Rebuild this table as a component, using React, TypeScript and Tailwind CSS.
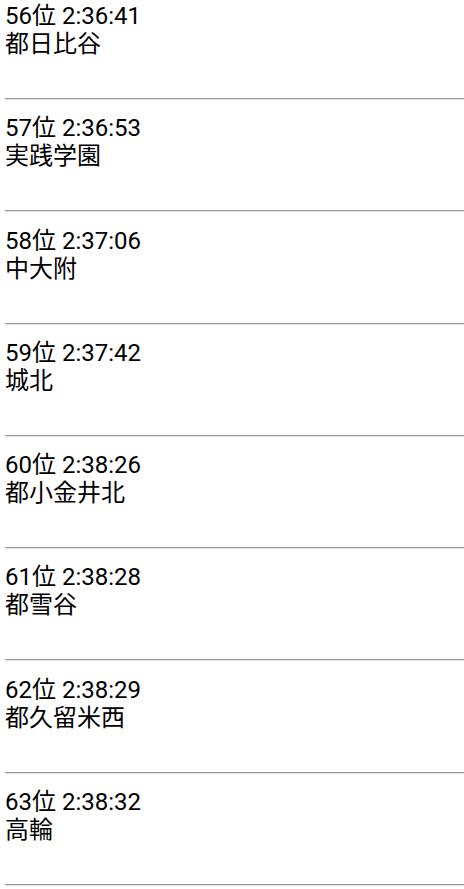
const results = [
  { rank: 56, time: '2:36:41', school: '都日比谷' },
  { rank: 57, time: '2:36:53', school: '実践学園' },
  { rank: 58, time: '2:37:06', school: '中大附' },
  { rank: 59, time: '2:37:42', school: '城北' },
  { rank: 60, time: '2:38:26', school: '都小金井北' },
  { rank: 61, time: '2:38:28', school: '都雪谷' },
  { rank: 62, time: '2:38:29', school: '都久留米西' },
  { rank: 63, time: '2:38:32', school: '高輪' },
];

const App = () => {
  return (
    <div
      className="min-h-screen bg-white text-black"
      style={{ fontFamily: 'Roboto, "Noto Sans CJK JP", sans-serif' }}
    >
      {results.map((r) => (
        <div key={r.rank} className="pl-[5px]">
          {/* rank + time, then school */}
          <div className="pt-[2px] text-[24px] leading-[28px]">
            <div>
              {r.rank}位 {r.time}
            </div>
            <div>{r.school}</div>
          </div>
          <div className="mt-[40px] mb-[12.3px] h-[2px] border-t border-b border-t-[#9a9a9a] border-b-[#e2e2e2]" />
        </div>
      ))}
    </div>
  );
};

export default App;
